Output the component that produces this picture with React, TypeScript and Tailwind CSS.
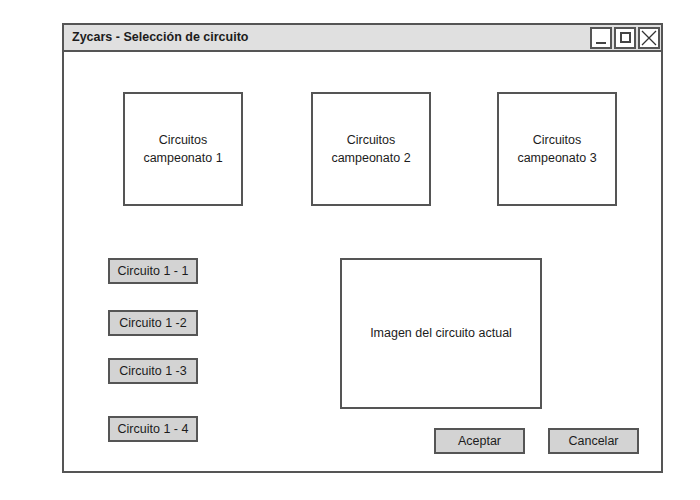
const font = "font-['Liberation_Sans',Arial,sans-serif]";

const Panel = ({ label }: { label: string }) => (
  <div className="w-[120px] h-[114px] border-2 border-[#555] bg-white flex items-center justify-center text-center text-[12.5px] leading-[18px] text-[#1c1c1c]">
    <span className="whitespace-pre-line">{label}</span>
  </div>
);

const Btn = ({ label, className = "" }: { label: string; className?: string }) => (
  <div
    className={`h-[26px] border-2 border-[#555] bg-[#d3d3d3] flex items-center justify-center text-[12.5px] text-[#1c1c1c] ${className}`}
  >
    {label}
  </div>
);

const WinBtn = ({ children }: { children: React.ReactNode }) => (
  <div className="w-[22px] h-[22px] border-2 border-[#555] bg-white flex items-center justify-center">
    {children}
  </div>
);

export default function App() {
  return (
    <div className={`w-[700px] h-[500px] bg-white pt-[23px] pl-[62px] ${font}`}>
      <div className="w-[601px] h-[450px] border-2 border-[#555] flex flex-col">
        <div className="h-[27px] bg-[#e0e0e0] border-b-2 border-[#555] flex items-center pl-[8px] pr-[1px]">
          <div className="flex-1 font-bold text-[12.5px] text-[#1c1c1c]">Zycars - Selección de circuito</div>
          <div className="flex gap-[2px]">
            <WinBtn>
              <div className="w-[10px] h-[2px] bg-[#444] mt-[10px]" />
            </WinBtn>
            <WinBtn>
              <div className="w-[11px] h-[11px] border-2 border-[#444]" />
            </WinBtn>
            <WinBtn>
              <svg width="16" height="16" viewBox="0 0 16 16">
                <path d="M1 1 L15 15 M15 1 L1 15" stroke="#333" strokeWidth="1.3" fill="none" />
              </svg>
            </WinBtn>
          </div>
        </div>

        <div className="flex pl-[59px] pt-[40px]">
          <Panel label={"Circuitos\ncampeonato 1"} />
          <div className="ml-[68px]">
            <Panel label={"Circuitos\ncampeonato 2"} />
          </div>
          <div className="ml-[66px]">
            <Panel label={"Circuitos\ncampeonato 3"} />
          </div>
        </div>

        <div className="flex pl-[44px] pt-[52px]">
          <div className="flex flex-col w-[90px]">
            <Btn label="Circuito 1 - 1" />
            <Btn label="Circuito 1 -2" className="mt-[26px]" />
            <Btn label="Circuito 1 -3" className="mt-[22px]" />
            <Btn label="Circuito 1 - 4" className="mt-[32px]" />
          </div>
          <div className="ml-[142px] flex flex-col">
            <div className="w-[202px] h-[151px] border-2 border-[#555] flex items-center justify-center text-[12.5px] text-[#1c1c1c]">
              Imagen del circuito actual
            </div>
            <div className="flex pl-[94px] mt-[19px] gap-[23px]">
              <Btn label="Aceptar" className="w-[91px]" />
              <Btn label="Cancelar" className="w-[91px]" />
            </div>
          </div>
        </div>
      </div>
    </div>
  );
}
